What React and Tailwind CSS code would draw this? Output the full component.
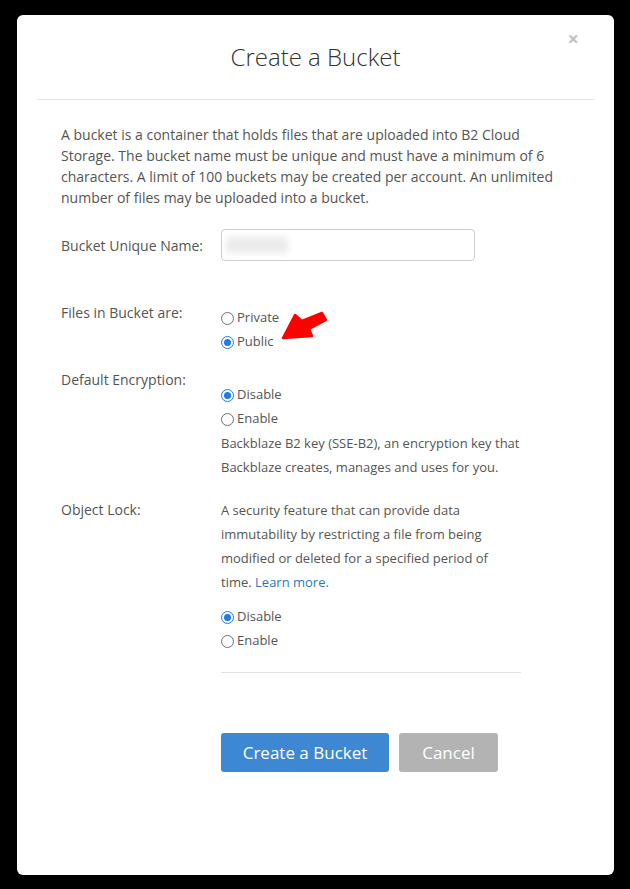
import React from "react";

function Radio({ checked, label }) {
  return (
    <div className="flex items-center h-[24px] text-[13px] text-[#555]">
      {checked ? (
        <span className="w-[13px] h-[13px] rounded-full border-[1.5px] border-[#1f7af0] flex items-center justify-center mr-[3px] bg-white">
          <span className="w-[7px] h-[7px] rounded-full bg-[#1f7af0]" />
        </span>
      ) : (
        <span className="w-[13px] h-[13px] rounded-full border border-[#6f6f6f] mr-[3px] bg-white" />
      )}
      <span>{label}</span>
    </div>
  );
}

export default function App() {
  return (
    <div
      className="w-[630px] h-[889px] bg-black pt-[15px] pl-[17px]"
      style={{ fontFamily: '"Open Sans", "Liberation Sans", sans-serif' }}
    >
      <div className="w-[597px] h-[860px] bg-white rounded-[6px] relative">
        <button className="absolute right-[35px] top-[14px] text-[20px] font-bold text-[#c2c2c2] leading-none">
          ×
        </button>
        <div className="h-[84px] flex items-center justify-center">
          <h1 className="text-[24px] font-light text-[#333] leading-none">Create a Bucket</h1>
        </div>
        <div className="mx-[20px] border-t border-[#e2e2e2]" />
        <div className="px-[44px] pt-[24px] text-[#555]">
          <p className="text-[14px] leading-[21px] w-[510px]">
            A bucket is a container that holds files that are uploaded into B2 Cloud Storage. The bucket name must be
            unique and must have a minimum of 6 characters. A limit of 100 buckets may be created per account. An
            unlimited number of files may be uploaded into a bucket.
          </p>

          <div className="flex items-center mt-[21px]">
            <label className="w-[160px] text-[14px]">Bucket Unique Name:</label>
            <div className="w-[254px] h-[32px] border border-[#cfcfcf] rounded-[4px] flex items-center px-[4px] overflow-hidden">
              <div className="w-[62px] h-[16px] bg-[#ebebeb] blur-[3px]" />
            </div>
          </div>

          <div className="flex items-start mt-[41px]">
            <label className="w-[160px] text-[14px] leading-[22px]">Files in Bucket are:</label>
            <div className="relative pt-[4px]">
              <Radio label="Private" />
              <Radio checked label="Public" />
              <svg
                className="absolute left-[59px] top-[9px]"
                width="50"
                height="32"
                viewBox="0 0 50 32"
              >
                <polygon
                  points="3,27 15,4 22,10 42,2 46,9 29,18 32,25"
                  fill="#ff0000"
                  stroke="#ff0000"
                  strokeWidth="2.5"
                  strokeLinejoin="round"
                />
              </svg>
            </div>
          </div>

          <div className="flex items-start mt-[15px]">
            <label className="w-[160px] text-[14px] leading-[22px]">Default Encryption:</label>
            <div className="pt-[14px]">
              <Radio checked label="Disable" />
              <Radio label="Enable" />
              <p className="text-[13px] leading-[24px] text-[#555]">
                Backblaze B2 key (SSE-B2), an encryption key that
                <br />
                Backblaze creates, manages and uses for you.
              </p>
            </div>
          </div>

          <div className="flex items-start mt-[19px]">
            <label className="w-[160px] text-[14px] leading-[24px]">Object Lock:</label>
            <div className="w-[300px]">
              <p className="text-[13px] leading-[24px] text-[#555]">
                A security feature that can provide data
                <br />
                immutability by restricting a file from being
                <br />
                modified or deleted for a specified period of
                <br />
                time. <a className="text-[#2b78c2]">Learn more.</a>
              </p>
              <div className="mt-[11px]">
                <Radio checked label="Disable" />
                <Radio label="Enable" />
              </div>
              <div className="mt-[19px] border-t border-[#e2e2e2]" />
            </div>
          </div>

          <div className="flex gap-[10px] ml-[160px] mt-[60px]">
            <button className="w-[168px] h-[39px] rounded-[3px] bg-[#3e88d3] text-white text-[17px]">
              Create a Bucket
            </button>
            <button className="w-[99px] h-[39px] rounded-[3px] bg-[#b3b3b3] text-white text-[17px]">
              Cancel
            </button>
          </div>
        </div>
      </div>
    </div>
  );
}
